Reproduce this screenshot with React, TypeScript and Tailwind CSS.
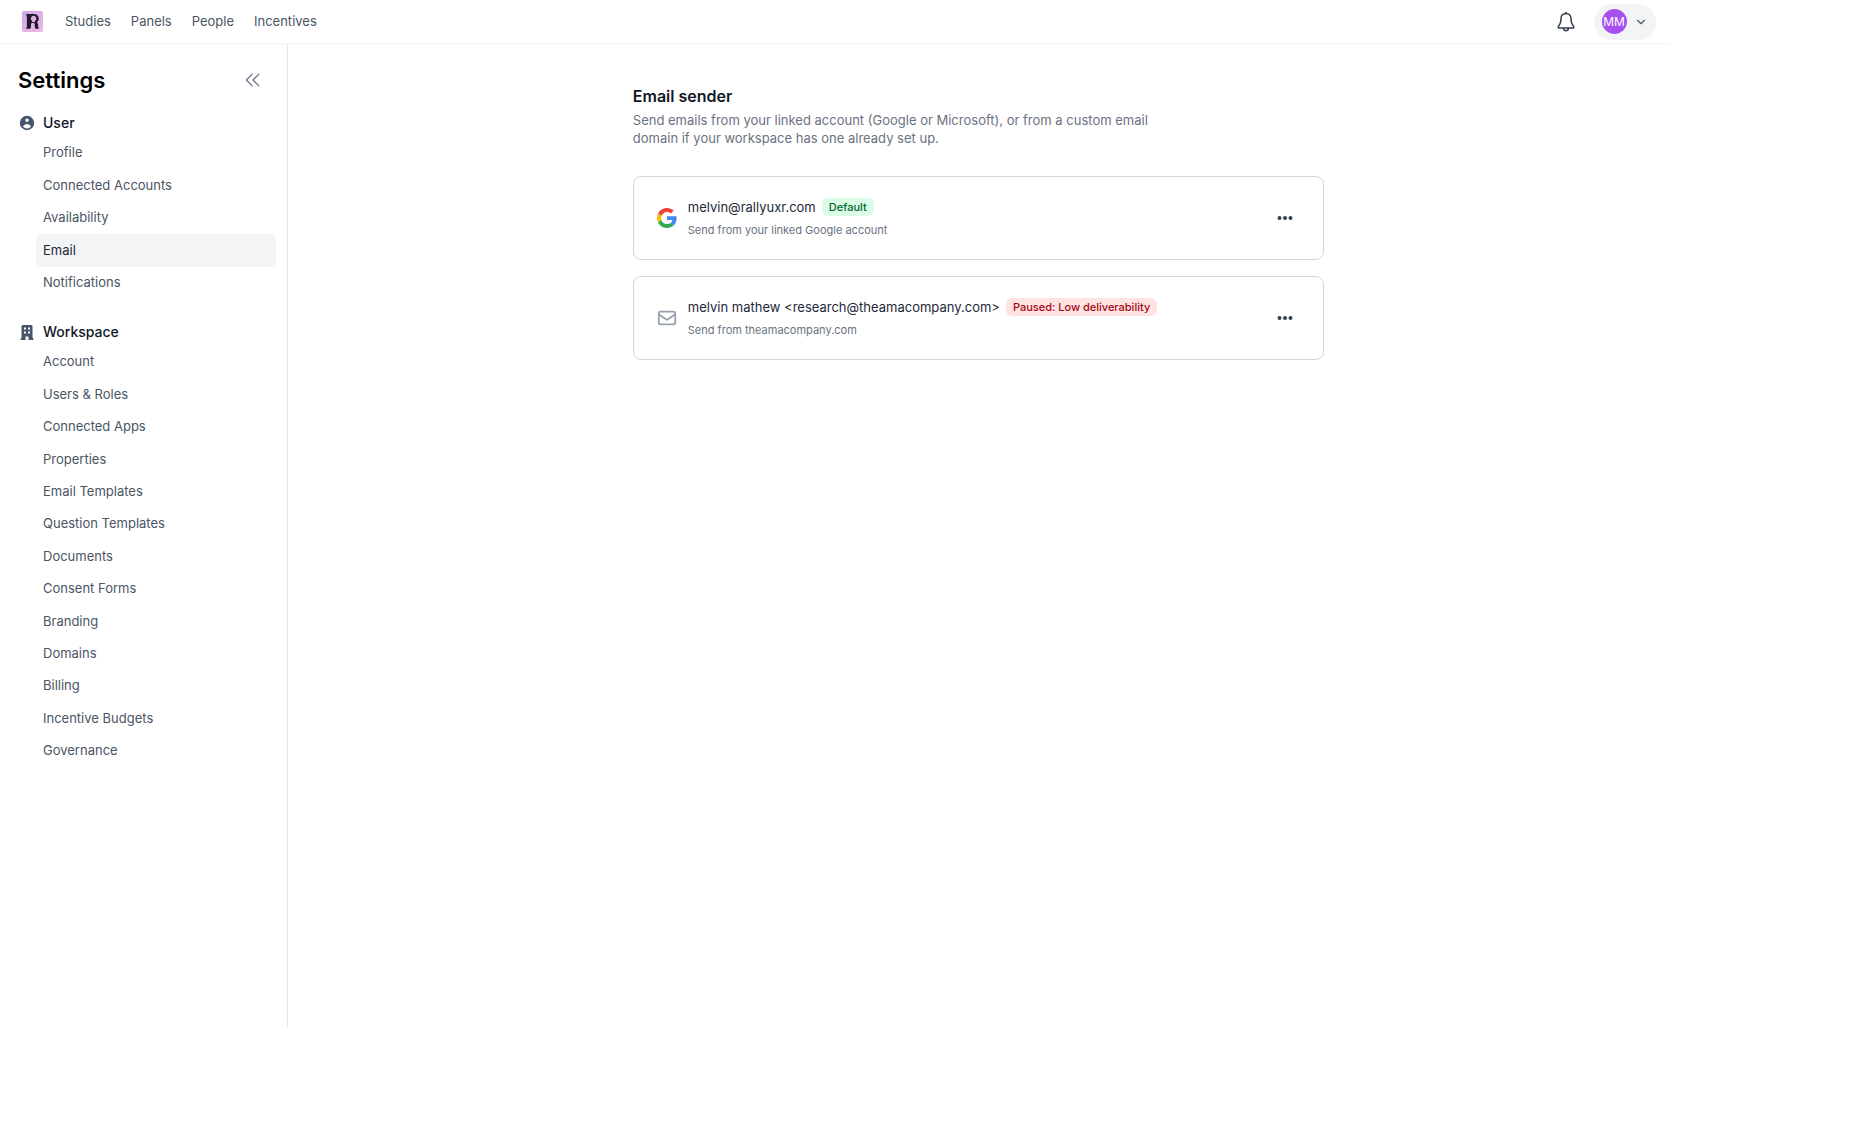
import {
  HiOutlineChevronDoubleLeft,
  HiOutlineMail,
  HiUserCircle,
} from "react-icons/hi";
import { FiChevronDown } from "react-icons/fi";
import classnames from "clsx";
import { useState } from "react";

type SenderType = {
  id: number;
  name: string;
  description: string;
  provider: "google" | "domain";
  badge: string;
  badgeTone: "green" | "red";
};

const mainLinks = ["Studies", "Panels", "People", "Incentives"];

const userLinks = [
  "Profile",
  "Connected Accounts",
  "Availability",
  "Email",
  "Notifications",
];

const workspaceLinks = [
  "Account",
  "Users & Roles",
  "Connected Apps",
  "Properties",
  "Email Templates",
  "Question Templates",
  "Documents",
  "Consent Forms",
  "Branding",
  "Domains",
  "Billing",
  "Incentive Budgets",
  "Governance",
];

const senders: SenderType[] = [
  {
    id: 1,
    name: "melvin@rallyuxr.com",
    description: "Send from your linked Google account",
    provider: "google",
    badge: "Default",
    badgeTone: "green",
  },
  {
    id: 2,
    name: "melvin mathew <research@theamacompany.com>",
    description: "Send from theamacompany.com",
    provider: "domain",
    badge: "Paused: Low deliverability",
    badgeTone: "red",
  },
];

const Logo = () => (
  <svg width="21" height="21" viewBox="0 0 21 21" aria-hidden="true">
    <defs>
      <linearGradient id="logo-bg" x1="0" y1="0" x2="1" y2="1">
        <stop offset="0" stopColor="#c9a6ea" />
        <stop offset="1" stopColor="#eebbdf" />
      </linearGradient>
    </defs>
    <rect width="21" height="21" rx="2" fill="url(#logo-bg)" />
    <path
      fill="#24182f"
      fillRule="evenodd"
      d="M4.200 3h7.800a4.600 4.600 0 0 1 3 8.200c.8.700 1.100 1.600 1.100 2.700v1.900c0 .4.200.6.700.6v1.300h-2.500c-1 0-1.500-.6-1.500-1.500v-2.500c0-1.200-.7-1.900-1.900-1.900S9 12.500 9 13.700v2.200c0 1.200-.7 1.800-1.800 1.800h-3v-1.300c.4 0 .7-.3.700-.7V5c0-.4-.3-.7-.7-.7zM11.600 4.800a2.900 2.900 0 0 0-1.500 5.300v.9h2.900v-.9a2.900 2.900 0 0 0-1.400-5.300z"
    />
  </svg>
);

const BellIcon = () => (
  <svg
    width="20"
    height="22"
    viewBox="0 0 20 22"
    fill="none"
    stroke="#374151"
    strokeWidth="1.500"
    strokeLinecap="round"
    strokeLinejoin="round"
    aria-hidden="true"
  >
    <path d="M10 2.500c-3.300 0-5 2.300-5 5.300 0 4.200-1 6-2.700 7.700v1.400h15.400v-1.400C16 13.800 15 12 15 7.800c0-3-1.700-5.300-5-5.300zM10 2.500V1.600" />
    <path d="M7.600 17.200c.1 1.600 1 2.500 2.400 2.500s2.300-.9 2.400-2.500" />
  </svg>
);

const BuildingIcon = () => (
  <svg width="14" height="15" viewBox="0 0 14 15" fill="#475569" aria-hidden="true">
    <path
      fillRule="evenodd"
      d="M3 0h8a1.500 1.500 0 0 1 1.500 1.500v11.300h.2a.6.600 0 0 1 .6.600V15H8.500v-3.500h-3V15H.700v-1.600a.6.600 0 0 1 .6-.6h.2V1.500A1.500 1.500 0 0 1 3 0zM4 2.500v2h2v-2zM8 2.500v2h2v-2zM4 6.500v2h2v-2zM8 6.500v2h2v-2z"
    />
  </svg>
);

const GoogleIcon = () => (
  <svg width="20" height="20" viewBox="0 0 48 48" aria-hidden="true">
    <path
      fill="#EA4335"
      d="M24 9.500c3.540 0 6.710 1.220 9.210 3.600l6.850-6.850C35.900 2.380 30.470 0 24 0 14.620 0 6.510 5.380 2.560 13.220l7.980 6.190C12.430 13.720 17.740 9.500 24 9.500z"
    />
    <path
      fill="#4285F4"
      d="M46.980 24.550c0-1.570-.15-3.090-.38-4.550H24v9.020h12.940c-.58 2.960-2.260 5.480-4.780 7.180l7.730 6c4.510-4.180 7.090-10.360 7.090-17.650z"
    />
    <path
      fill="#FBBC05"
      d="M10.530 28.590c-.48-1.450-.76-2.990-.76-4.590s.27-3.140.76-4.590l-7.980-6.190C.92 16.460 0 20.120 0 24c0 3.880.92 7.540 2.560 10.780l7.970-6.190z"
    />
    <path
      fill="#34A853"
      d="M24 48c6.480 0 11.930-2.130 15.890-5.810l-7.730-6c-2.150 1.450-4.920 2.300-8.160 2.300-6.260 0-11.570-4.220-13.470-9.910l-7.980 6.190C6.510 42.620 14.620 48 24 48z"
    />
  </svg>
);

const DotsIcon = () => (
  <svg width="16" height="6" viewBox="0 0 16 6" fill="#374151" aria-hidden="true">
    <circle cx="2.500" cy="3" r="2" />
    <circle cx="8" cy="3" r="2" />
    <circle cx="13.500" cy="3" r="2" />
  </svg>
);

const NavList = ({
  links,
  active,
  onSelect,
  className,
}: {
  links: string[];
  active: string;
  onSelect: (link: string) => void;
  className: string;
}) => (
  <ul className={classnames("mt-0.5 mr-[11px] ml-9 grid auto-rows-fr", className)}>
    {links.map((link) => (
      <li key={link} className="flex">
        <a
          href="#"
          onClick={() => onSelect(link)}
          className={classnames(
            "flex flex-1 items-center rounded-md px-[7px] text-[13px]",
            link === active ? "bg-gray-100 text-gray-800" : "text-gray-600"
          )}
        >
          {link}
        </a>
      </li>
    ))}
  </ul>
);

const Sender = ({ sender }: { sender: SenderType }) => (
  <li className="flex h-[84px] items-center rounded-lg border border-gray-300 px-[23px]">
    <span className="flex w-5 shrink-0 justify-center">
      {sender.provider === "google" ? (
        <GoogleIcon />
      ) : (
        <HiOutlineMail className="size-[22px] shrink-0 text-gray-400" />
      )}
    </span>
    <div className="ml-[11px] flex-1">
      <div className="flex items-center gap-1.5">
        <h2 className="text-[13px] leading-5 text-gray-800">{sender.name}</h2>
        <span
          className={classnames(
            "rounded-md px-[7px] text-[11px] leading-[18px] font-medium",
            sender.badgeTone === "green"
              ? "bg-green-100 text-green-800"
              : "bg-red-100 text-red-800"
          )}
        >
          {sender.badge}
        </span>
      </div>
      <p className="mt-[3px] text-[11px] leading-5 text-gray-500">
        {sender.description}
      </p>
    </div>
    <button type="button" aria-label="More options" className="p-[7px]">
      <DotsIcon />
    </button>
  </li>
);

const App = () => {
  const [active, setActive] = useState("Email");

  return (
    <div className="flex min-h-[90vh] w-[90%] flex-col bg-white font-['Inter',sans-serif]">
      <header className="flex h-11 items-center justify-between border-b border-gray-100 pr-[13px] pl-[22px]">
        <nav className="flex items-center gap-[22px]">
          <a href="#" aria-label="Home">
            <Logo />
          </a>
          <div className="flex items-center gap-5">
            {mainLinks.map((link) => (
              <a key={link} href="#" className="text-[13px] text-gray-600">
                {link}
              </a>
            ))}
          </div>
        </nav>
        <div className="flex items-center gap-[18px]">
          <button type="button" aria-label="Notifications">
            <BellIcon />
          </button>
          <button
            type="button"
            aria-label="Account menu"
            className="flex h-9 items-center gap-[7px] rounded-full bg-gray-100 px-2"
          >
            <span className="flex size-[25px] items-center justify-center rounded-full bg-[#a84ff0] text-xs text-white">
              MM
            </span>
            <FiChevronDown className="size-[14px] text-gray-600" />
          </button>
        </div>
      </header>

      <div className="flex flex-1">
        <aside className="w-72 shrink-0 border-r border-gray-200">
          <div className="flex items-center justify-between pt-[22px] pr-6 pl-[18px]">
            <h1 className="text-[22px] leading-7 font-semibold text-black">
              Settings
            </h1>
            <button type="button" aria-label="Collapse sidebar">
              <HiOutlineChevronDoubleLeft
                strokeWidth={1.5}
                className="size-5 text-gray-500"
              />
            </button>
          </div>

          <h2 className="mt-[17px] flex h-6 items-center gap-[7px] pl-[18px] text-sm font-medium text-gray-900">
            <HiUserCircle className="size-[18px] text-slate-600" />
            User
          </h2>
          <NavList
            links={userLinks}
            active={active}
            onSelect={setActive}
            className="h-[162px]"
          />

          <h2 className="mt-[21px] flex h-6 items-center gap-[7px] pl-[18px] text-sm font-medium text-gray-900">
            <span className="flex w-[18px] justify-center">
              <BuildingIcon />
            </span>
            Workspace
          </h2>
          <NavList
            links={workspaceLinks}
            active={active}
            onSelect={setActive}
            className="h-[421px]"
          />
        </aside>

        <main className="flex-1 px-6 pt-10">
          <div className="mx-auto max-w-[691px]">
            <h1 className="text-base leading-6 font-semibold text-gray-900">
              Email sender
            </h1>
            <p className="mt-[3px] max-w-[530px] text-[13px] leading-[18px] text-gray-500">
              Send emails from your linked account (Google or Microsoft), or
              from a custom email domain if your workspace has one already set
              up.
            </p>
            <ul className="mt-[29px] flex flex-col gap-4">
              {senders.map((sender) => (
                <Sender key={sender.id} sender={sender} />
              ))}
            </ul>
          </div>
        </main>
      </div>
    </div>
  );
};

export default App;
